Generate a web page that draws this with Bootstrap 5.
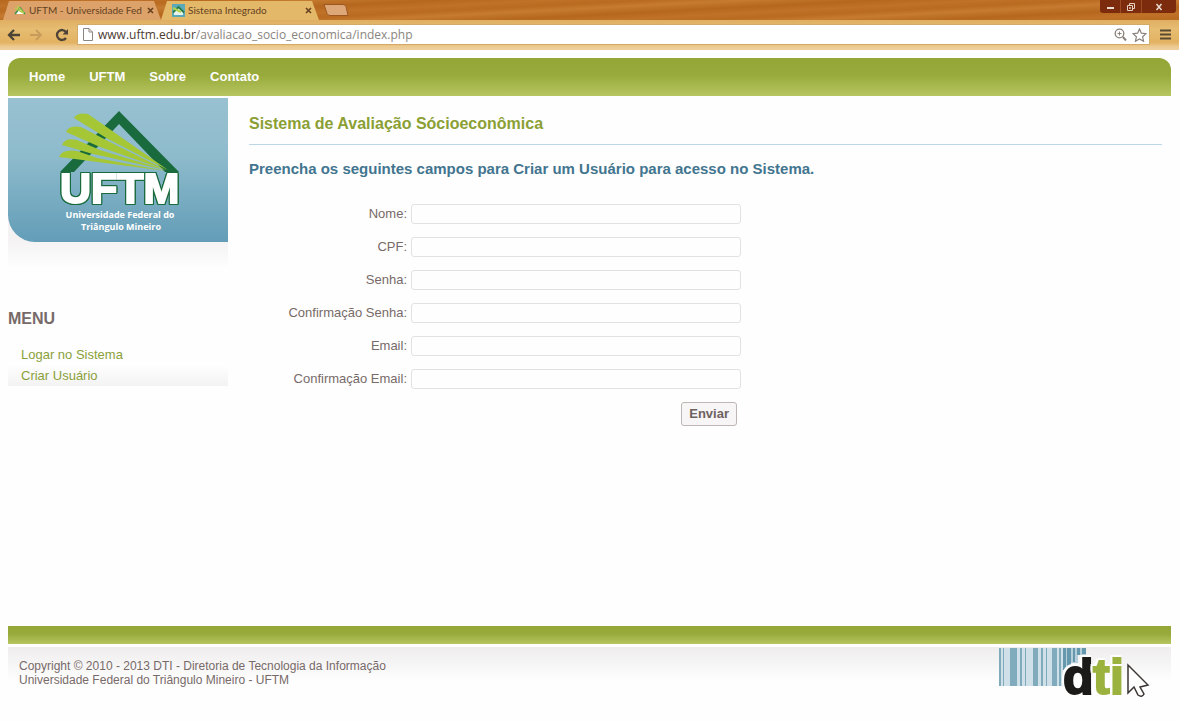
<!DOCTYPE html>
<html lang="pt-BR">
<head>
<meta charset="utf-8">
<meta name="viewport" content="width=device-width, initial-scale=1">
<title>Sistema Integrado</title>
<link href="https://cdn.jsdelivr.net/npm/bootstrap@5.3.0/dist/css/bootstrap.min.css" rel="stylesheet">
<style>
body{font-family:"Liberation Sans",Arial,sans-serif;font-size:13px;line-height:16px;color:#776a68;background:#fefefe}
button{font-family:inherit}
/* browser frame */
.chrome-ui{font-family:"Open Sans","Noto Sans",sans-serif;color:#5d3d1c}
.tab-strip{height:20px;padding-left:3px;background:repeating-linear-gradient(177deg,#b5671e 0,#bf7228 6px,#b96b20 11px,#c57b30 16px,#b5671e 23px)}
.tab-item{position:relative;height:20px;width:158px;padding:0 7px 0 11px;gap:3px;font-family:Lato,"Open Sans",sans-serif;font-size:10px;line-height:20px}
.tab-item svg{flex-shrink:0}
.tab-item::before{content:"";position:absolute;inset:1px 0 0;background:#dca269;clip-path:polygon(6px 0,calc(100% - 7px) 0,100% 100%,0 100%);z-index:0}
.tab-item.current::before{background:#e4b869}
.tab-item>*{position:relative}
.tab-item .tab-name{color:#63411f;white-space:nowrap;flex:1}
.plain-btn{border:0;background:none;padding:0;line-height:1;color:inherit;display:flex;align-items:center;justify-content:center}
.window-keys{height:13px;background:#7c2c0d;border-radius:0 0 3px 3px;margin-right:3px}
.window-keys button{width:21px;border-right:1px solid #a04c22}
.window-keys button:last-child{width:34px;border:0}
.tool-bar{height:30px;padding:4px 8px 5px 7px;background:linear-gradient(#dfae62,#e6bd72 30%,#e3b262 75%,#ecc98f 88%,#f0cfa0)}
.address{height:21px;background:#fff;border:1px solid #d3ab69;padding:0 2px 0 5px;gap:5px;margin-right:10px}
.address input{border:0;outline:0;background:none;padding:0;min-width:0;font-size:12px;color:#8a8580}
.address .host{color:#4b3a33;font-size:12px}
/* site */
.site{padding:8px 8px 0}
.green-bar{background:linear-gradient(#94a636,#98aa3b 45%,#b7c661)}
.top-menu{height:38px;border-radius:12px 12px 0 0;padding:0 21px;gap:24px;font-size:13px;font-weight:700}
.top-menu a{color:#fefefe;text-decoration:none}
.side-col{width:220px;padding-top:2px}
.brand-box{height:144px;border-radius:0 0 0 27px;background:linear-gradient(#98c1d1,#8ebbcc 40%,#639db7)}
.brand-shade{margin-top:-30px;padding-top:30px;height:56px;background:linear-gradient(#f4f2f2 50%,#fefefe)}
.brand-word{stroke:#fff;stroke-width:2px;filter:drop-shadow(1px 0 #196b3e) drop-shadow(-1px 0 #196b3e) drop-shadow(0 1px #196b3e) drop-shadow(0 -1px #196b3e)}
.dti-word{stroke-width:2px;filter:drop-shadow(-2px 0 #fefefe) drop-shadow(0 -2px #fefefe)}
.menu-title{font-size:16px;line-height:20px;font-weight:700;margin:41px 0 15px}
.menu-links a{display:block;padding:0 13px;line-height:21px;font-size:13px;color:#8aa03a;text-decoration:none}
.menu-links li:last-child{background:linear-gradient(#fefefe,#f4f3f3)}
.main-col{padding:18px 9px 0 21px}
.main-col h1{font-size:16px;line-height:20px;font-weight:700;color:#8b9f34;padding-bottom:10px;margin-bottom:14px;border-bottom:1px solid #bcd8e8}
.main-col h2{font-size:15px;line-height:20px;font-weight:700;color:#42758f;margin-bottom:25px}
.form-area{width:492px}
.field-row{height:20px;margin-bottom:13px}
.field-row label{width:158px;text-align:right;font-size:13px}
.field-row .form-control{flex:1;height:20px;min-height:0;padding:0 6px;font-size:13px;border:1px solid #e3e1e2;border-radius:3px;background:#fefefe}
.send-btn{height:24px;padding:0 7px;font-size:13px;line-height:20px;font-weight:700;color:#6e625f;background:#f7f5f5;border:1px solid #bdb6b5;border-radius:3px}
.foot-bar{height:18px}
.foot-body{margin-top:3px;height:75px;padding:0 21px 0 11px;font-size:12px;line-height:14px;background:linear-gradient(#efedee,#fefefe 35px)}
.foot-body p{padding-top:12px}
.foot-body svg{overflow:visible}
</style>
</head>
<body class="d-flex flex-column min-vh-100">
<header class="chrome-ui">
  <div class="tab-strip d-flex">
    <div class="tab-item d-flex align-items-center">
      <svg width="12" height="12" viewBox="0 0 12 12"><path d="M1 10 6 4l5 6" fill="#fff" stroke="#4c9451" stroke-width="1.8"/><path d="M1 4l8 5M3 2l7 7" stroke="#b2d04e" stroke-width="1.4"/></svg>
      <span class="tab-name">UFTM - Universidade Fed</span>
      <button class="plain-btn" aria-label="Fechar guia UFTM"><svg width="7" height="7" viewBox="0 0 7 7"><path d="M1 1l5 5M6 1 1 6" stroke="#65411f" stroke-width="1.6"/></svg></button>
    </div>
    <div class="tab-item current d-flex align-items-center">
      <svg width="13" height="13" viewBox="0 0 13 13"><path d="M0 0h13v13H0z" fill="#5aa9b8"/><path d="M2 11V8l4.500-4L11 8v3z" fill="#e9f3ee"/><path d="M1 8.500 6.500 3 12 8.500" fill="none" stroke="#287c48" stroke-width="1.800"/><path d="M1 4l8 4" stroke="#add34f" stroke-width="2"/></svg>
      <span class="tab-name">Sistema Integrado</span>
      <button class="plain-btn" aria-label="Fechar guia Sistema Integrado"><svg width="7" height="7" viewBox="0 0 7 7"><path d="M1 1l5 5M6 1 1 6" stroke="#65411f" stroke-width="1.6"/></svg></button>
    </div>
    <button class="plain-btn ms-1" aria-label="Nova guia"><svg width="26" height="12" viewBox="0 0 26 12"><path d="M1 .5h19q2 0 3 2l2 9H7q-2 0-3-2z" fill="#dda778" stroke="#9c5620"/></svg></button>
    <div class="window-keys d-flex ms-auto">
      <button class="plain-btn" aria-label="Minimizar"><svg width="9" height="9"><path d="M1 6h7" stroke="#eadbd0" stroke-width="2"/></svg></button>
      <button class="plain-btn" aria-label="Restaurar"><svg width="10" height="10" fill="none" stroke="#e6d1c4"><path d="M3.500 3V1.500h5v5H7M1.500 3.500h5v5h-5zM3.500 5.500h1v1h-1z"/></svg></button>
      <button class="plain-btn" aria-label="Fechar"><svg width="8" height="8"><path d="M1.500 1l5 6M6.500 1l-5 6" stroke="#eadbd0" stroke-width="1.500"/></svg></button>
    </div>
  </div>
  <div class="tool-bar d-flex align-items-center">
    <button class="plain-btn me-2" aria-label="Voltar"><svg width="14" height="12" fill="none" stroke="#4d4437" stroke-width="2.300"><path d="M13 6H2M7 1 2 6l5 5"/></svg></button>
    <button class="plain-btn me-2" aria-label="Avançar"><svg width="14" height="12" fill="none" stroke="#c69b5b" stroke-width="1.800"><path d="M1 6h11M7 1l5 5-5 5"/></svg></button>
    <button class="plain-btn ms-1 me-2" aria-label="Recarregar"><svg width="14" height="14"><path d="M11 10A5 5 0 1 1 11 4" fill="none" stroke="#4d4437" stroke-width="2.300"/><path d="M13 1v5.500H7.500z" fill="#4d4437"/></svg></button>
    <div class="address d-flex align-items-center flex-grow-1">
      <svg width="10" height="13" fill="#fff" stroke="#8d8783"><path d="M.5.5h5.500l3.500 3.500v8.500h-9zM6 .5V4h3.500"/></svg>
      <div class="d-flex flex-grow-1 align-items-center"><label for="url" class="host">www.uftm.edu.br</label><input id="url" class="flex-grow-1" value="/avaliacao_socio_economica/index.php"></div>
      <button class="plain-btn" aria-label="Zoom"><svg width="13" height="13" fill="none" stroke="#8b817c"><circle cx="5.500" cy="5.500" r="4.300" stroke-width="1.300"/><path d="M3.500 5.500h4M5.500 3.500v4"/><path d="m9 9 3 3.500" stroke-width="2"/></svg></button>
      <button class="plain-btn" aria-label="Favoritos"><svg width="15" height="14" fill="none" stroke="#8b817c" stroke-width="1.200"><path d="M7.500 1l1.900 4.200 4.600.5-3.400 3.100 1 4.500-4.100-2.300-4.100 2.300 1-4.500L1 5.700l4.600-.5z"/></svg></button>
    </div>
    <button class="plain-btn" aria-label="Menu do navegador"><svg width="11" height="11" stroke="#5a4a33" stroke-width="2"><path d="M0 1.500h11M0 5.500h11M0 9.500h11"/></svg></button>
  </div>
</header>

<div class="site d-flex flex-column flex-grow-1">
  <nav class="top-menu green-bar d-flex align-items-center">
    <a href="#">Home</a><a href="#">UFTM</a><a href="#">Sobre</a><a href="#">Contato</a>
  </nav>
  <div class="d-flex">
    <aside class="side-col flex-shrink-0">
      <div class="brand-box position-relative">
        <svg width="220" height="144" viewBox="0 0 220 144" role="img" aria-label="UFTM - Universidade Federal do Triângulo Mineiro">
          <path d="M111 13 171 74h-14L111 26 66 74H52z" fill="#196b3e"/>
          <g fill="#a5c735"><path d="M66 20q3-6 14-4L160 72 100 41z"/><path d="M58 34q3-7 15-5L100 43 158 72 92 49z"/><path d="M54 47q3-8 15-5l23 10 66 20-73-16z"/><path d="M51 59q3-8 18-6l20 7 69 13-91-12z"/></g>
          <text class="brand-word" x="52" y="105" font-family="Liberation Sans,Arial,sans-serif" font-weight="700" font-size="43" fill="#fff">UFTM</text>
          <g font-family="Open Sans,Noto Sans,sans-serif" font-weight="700" font-size="9" fill="#fff" text-anchor="middle"><text x="112" y="120">Universidade Federal do</text><text x="113" y="132">Triângulo Mineiro</text></g>
        </svg>
      </div>
      <div class="brand-shade"></div>
      <h2 class="menu-title">MENU</h2>
      <ul class="menu-links list-unstyled mb-0"><li><a href="#">Logar no Sistema</a></li><li><a href="#">Criar Usuário</a></li></ul>
    </aside>
    <main class="main-col flex-grow-1">
      <h1>Sistema de Avaliação Sócioeconômica</h1>
      <h2>Preencha os seguintes campos para Criar um Usuário para acesso no Sistema.</h2>
      <form class="form-area">
        <div class="field-row d-flex align-items-center gap-1"><label for="nome">Nome:</label><input class="form-control" id="nome" type="text"></div>
        <div class="field-row d-flex align-items-center gap-1"><label for="cpf">CPF:</label><input class="form-control" id="cpf" type="text"></div>
        <div class="field-row d-flex align-items-center gap-1"><label for="senha">Senha:</label><input class="form-control" id="senha" type="password"></div>
        <div class="field-row d-flex align-items-center gap-1"><label for="senha2">Confirmação Senha:</label><input class="form-control" id="senha2" type="password"></div>
        <div class="field-row d-flex align-items-center gap-1"><label for="email">Email:</label><input class="form-control" id="email" type="email"></div>
        <div class="field-row d-flex align-items-center gap-1"><label for="email2">Confirmação Email:</label><input class="form-control" id="email2" type="email"></div>
        <div class="d-flex justify-content-end pe-1"><button class="send-btn" type="button">Enviar</button></div>
      </form>
    </main>
  </div>
  <footer class="mt-auto">
    <div class="foot-bar green-bar"></div>
    <div class="foot-body d-flex justify-content-between">
      <p class="mb-0">Copyright © 2010 - 2013 DTI - Diretoria de Tecnologia da Informação<br>Universidade Federal do Triângulo Mineiro - UFTM</p>
      <svg width="152" height="66" viewBox="0 0 152 66" role="img" aria-label="dti">
        <path d="M1 1h64v38H1z" fill="#cfe0e8"/><path d="M65 1h23v7h-8v8h-7v7h-8z" fill="#b4cedb"/>
        <g fill="#7fabbd"><path d="M1 1h2v38H1zM5 1h1v38H5zM12 1h7v38h-7zM22 1h2v38h-2zM27 1h1v38h-1zM35 1h5v38h-5zM43 1h2v38h-2zM48 1h1v38h-1zM54 1h5v38h-5zM61 1h2v38h-2z"/><path d="M65 1h3v22h-3zM69 1h4v20h-4zM75 1h2v14h-2zM79 1h3v7h-3zM84 1h4v6h-4z" fill="#6597ad"/></g>
        <g font-family="Liberation Sans,Arial,sans-serif" font-weight="700" font-size="50"><text class="dti-word" x="65" y="47" fill="#1c1a19" stroke="#1c1a19">d</text><text class="dti-word" x="95" y="47" fill="#9bb23f" stroke="#9bb23f">t</text><text class="dti-word" x="112" y="47" fill="#9bb23f" stroke="#9bb23f">i</text></g>
        <path d="M130 18v28l6-6 4 8q4 3 6-1l-4-7 8-2z" fill="#fefefe" stroke="#3b3533" stroke-width="1.500"/>
      </svg>
    </div>
  </footer>
</div>
<script src="https://cdn.jsdelivr.net/npm/bootstrap@5.3.0/dist/js/bootstrap.bundle.min.js"></script>
</body>
</html>
